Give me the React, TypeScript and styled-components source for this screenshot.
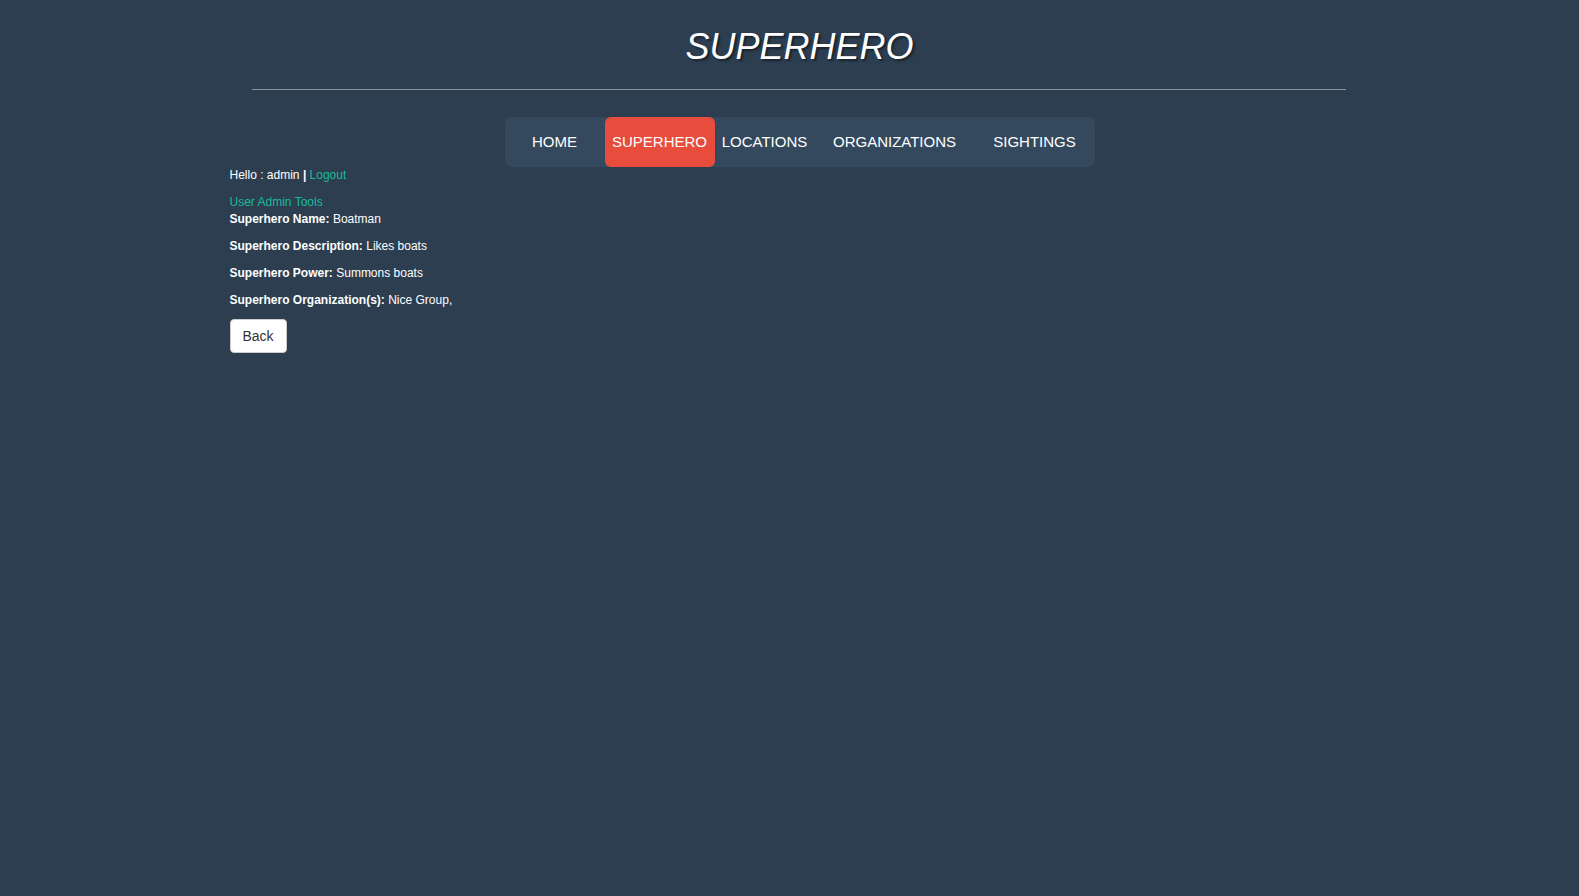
import React from "react";
import styled, { createGlobalStyle } from "styled-components";

const GlobalStyle = createGlobalStyle`
  html, body {
    margin: 0;
    padding: 0;
    background: #2c3e50;
    min-height: 100%;
  }
  body {
    font-family: "Liberation Sans", Arial, Helvetica, sans-serif;
    color: #ffffff;
    font-size: 12px;
    line-height: 17px;
  }
`;

const Page = styled.div`
  min-height: 896px;
  background: #2c3e50;
`;

const Container = styled.div`
  width: 1140px;
  margin-left: calc(50% - 575px);
  padding: 0 15px;
`;

const Header = styled.header`
  padding-top: 27px;
`;

const Title = styled.h1`
  margin: 0;
  text-align: center;
  font-size: 36px;
  line-height: 40px;
  font-style: italic;
  font-weight: 400;
  color: #ffffff;
  text-shadow: 2px 2px 2px #1a252f;
`;

const Rule = styled.hr`
  margin: 22px 24px 0 22px;
  border: 0;
  border-top: 1px solid #8a949c;
  height: 0;
`;

const NavWrap = styled.nav`
  display: flex;
  justify-content: center;
  margin-top: 27px;
`;

const NavBar = styled.ul`
  display: grid;
  grid-template-columns: 100px 110px 100px 160px 120px;
  margin: 0;
  padding: 0;
  list-style: none;
  background: #34495e;
  border-radius: 6px;
  height: 50px;
`;

const NavItem = styled.li<{ $active?: boolean }>`
  display: flex;
  align-items: center;
  justify-content: center;
  font-size: 15px;
  line-height: 21px;
  padding-bottom: 1px;
  color: #ffffff;
  background: ${(p) => (p.$active ? "#e74c3c" : "transparent")};
  border-radius: 6px;
  white-space: nowrap;
  cursor: pointer;
`;

const Greeting = styled.p`
  margin: 0 0 10px;
`;

const Sep = styled.b`
  font-weight: 700;
`;

const Link = styled.a`
  color: #18bc9c;
  text-decoration: none;
`;

const AdminLink = styled.div``;

const Field = styled.p`
  margin: 0 0 10px;
`;

const Label = styled.b`
  font-weight: 700;
`;

const BackButton = styled.button`
  margin-top: 0;
  background: #ffffff;
  color: #333333;
  border: 1px solid #cccccc;
  border-radius: 4px;
  padding: 6px 12px;
  font-family: "Liberation Sans", Arial, Helvetica, sans-serif;
  font-size: 14px;
  line-height: 20px;
  height: 34px;
  width: 57px;
  cursor: pointer;
`;

const navItems = [
  { label: "HOME" },
  { label: "SUPERHERO", active: true },
  { label: "LOCATIONS" },
  { label: "ORGANIZATIONS" },
  { label: "SIGHTINGS" },
];

const fields = [
  { label: "Superhero Name:", value: "Boatman" },
  { label: "Superhero Description:", value: "Likes boats" },
  { label: "Superhero Power:", value: "Summons boats" },
  { label: "Superhero Organization(s):", value: "Nice Group," },
];

export default function App() {
  return (
    <Page>
      <GlobalStyle />
      <Container>
        <Header>
          <Title>SUPERHERO</Title>
          <Rule />
        </Header>
        <NavWrap>
          <NavBar>
            {navItems.map((n) => (
              <NavItem key={n.label} $active={n.active}>
                {n.label}
              </NavItem>
            ))}
          </NavBar>
        </NavWrap>
        <Greeting>
          Hello : admin <Sep>|</Sep> <Link href="#">Logout</Link>
        </Greeting>
        <AdminLink>
          <Link href="#">User Admin Tools</Link>
        </AdminLink>
        {fields.map((f) => (
          <Field key={f.label}>
            <Label>{f.label}</Label> {f.value}
          </Field>
        ))}
        <BackButton>Back</BackButton>
      </Container>
    </Page>
  );
}
